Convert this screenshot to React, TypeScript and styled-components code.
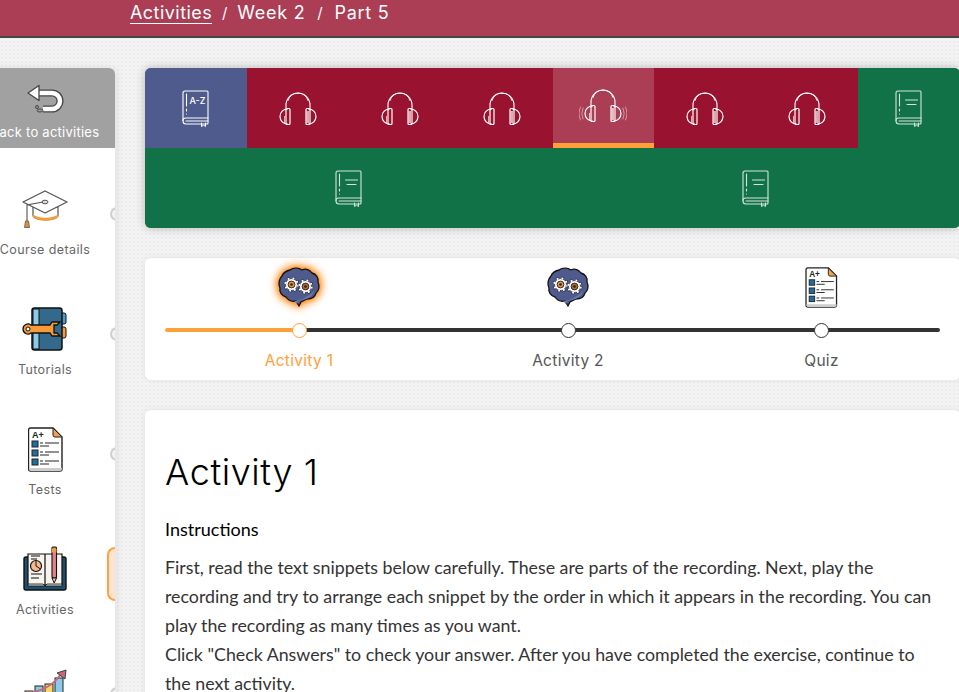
import type { ReactNode } from "react";
import styled, { createGlobalStyle } from "styled-components";

const GlobalStyle = createGlobalStyle`
  html, body {
    margin: 0;
    padding: 0;
    height: 100%;
    overflow: hidden;
    background: #f3f3f3;
  }
  * {
    box-sizing: border-box;
  }
`;

const HEADING_FONT = `Inter, "Open Sans", sans-serif`;

const Page = styled.div`
  height: 692px;
  overflow: hidden;
  background-color: #f3f3f3;
  background-image: radial-gradient(#ececec 1px, transparent 1px);
  background-size: 4px 4px;
`;
const TopBar = styled.div`
  height: 38px;
  padding-left: 130px;
  display: flex;
  align-items: flex-start;
  background: #ab3d55;
  border-bottom: 2px solid #454545;
  color: white;
  font-family: ${HEADING_FONT};
  font-size: 18px;
  line-height: 25px;
`;
const Crumb = styled.span<{ $link?: boolean }>`
  height: 24px;
  letter-spacing: ${(p) => (p.$link ? "0.45px" : "0.75px")};
  border-bottom: ${(p) => (p.$link ? "1px solid white" : "none")};
`;
const Slash = styled.span<{ $width: number }>`
  width: ${(p) => p.$width}px;
  font-size: 15px;
  text-align: center;
`;
const Body = styled.div`
  display: flex;
  align-items: flex-start;
  padding-top: 30px;
`;
const Sidebar = styled.div`
  flex: none;
  width: 140px;
  margin-left: -25px;
  border-radius: 0 6px 0 0;
  background: white;
  box-shadow: 2px 0 8px rgba(0, 0, 0, 0.08);
  font-family: ${HEADING_FONT};
`;
const BackButton = styled.div`
  height: 80px;
  padding-top: 16px;
  display: flex;
  flex-direction: column;
  align-items: center;
  border-radius: 0 6px 0 0;
  background: #a1a1a1;
  color: white;
  font-size: 13px;
  letter-spacing: 0.25px;
  white-space: nowrap;
`;
const BackLabel = styled.div`
  margin-top: 9px;
  line-height: 18px;
`;
const NavItem = styled.div`
  position: relative;
  height: 120px;
  padding-top: 38px;
  display: flex;
  flex-direction: column;
  align-items: center;
  overflow: hidden;
`;
const NavIcon = styled.div`
  width: 46px;
  height: 46px;
  display: flex;
  align-items: center;
  justify-content: center;
`;
const NavLabel = styled.div`
  margin-top: 10px;
  color: #666;
  font-size: 12.5px;
  line-height: 16px;
  letter-spacing: 0.4px;
  white-space: nowrap;
`;
const Handle = styled.div`
  position: absolute;
  top: 59px;
  right: -9px;
  width: 14px;
  height: 14px;
  border-radius: 50%;
  background: #f2f2f2;
  border: 2px solid #cfcfcf;
`;
const ActiveHandle = styled.div`
  position: absolute;
  top: 39px;
  right: 0;
  width: 8px;
  height: 54px;
  border-radius: 10px 0 0 10px;
  border: 2px solid #ffa23f;
  border-right: none;
  background: #fde4cf;
`;
const Main = styled.div`
  flex: none;
  width: 815px;
  margin-left: 30px;
  display: flex;
  flex-direction: column;
  gap: 30px;
`;
const TilePanel = styled.div`
  display: flex;
  flex-wrap: wrap;
  border-radius: 6px;
  overflow: hidden;
  background: #127247;
  box-shadow: 0 0 10px rgba(0, 0, 0, 0.25);
`;
const Tile = styled.div<{ $kind: "vocab" | "audio" | "read"; $active?: boolean }>`
  flex: 1 0 12.5%;
  height: 80px;
  display: flex;
  align-items: center;
  justify-content: center;
  color: white;
  background: ${(p) =>
    p.$active
      ? "#ab3d55"
      : p.$kind === "vocab"
        ? "#4f5b8d"
        : p.$kind === "audio"
          ? "#99122f"
          : "#127247"};
  border-bottom: ${(p) => (p.$active ? "5px solid #ffa038" : "none")};
`;
const StepCard = styled.div`
  height: 122px;
  padding: 0 20px;
  display: grid;
  grid-template-columns: 268px 270px 1fr;
  border-radius: 6px;
  background: white;
  box-shadow: 0 0 6px rgba(0, 0, 0, 0.08);
  font-family: ${HEADING_FONT};
`;
const Step = styled.div`
  display: flex;
  flex-direction: column;
  align-items: center;
`;
const StepIconBox = styled.div`
  height: 68px;
  padding-top: 9px;
  display: flex;
  justify-content: center;
`;
const Rail = styled.div<{ $state: "first" | "middle" | "last" }>`
  align-self: stretch;
  height: 4px;
  margin-top: 2px;
  display: flex;
  justify-content: center;
  align-items: center;
  background: ${(p) =>
    p.$state === "first"
      ? "linear-gradient(to right, #ffa038 50%, #333 50%)"
      : "#333"};
  border-radius: ${(p) =>
    p.$state === "first" ? "2px 0 0 2px" : p.$state === "last" ? "0 2px 2px 0" : "0"};
`;
const Dot = styled.div<{ $done?: boolean }>`
  flex: none;
  width: 15px;
  height: 15px;
  border-radius: 50%;
  background: white;
  border: 1px solid ${(p) => (p.$done ? "#ffa038" : "#333")};
`;
const StepLabel = styled.div<{ $done?: boolean }>`
  margin-top: 19px;
  color: ${(p) => (p.$done ? "#ffa038" : "#555")};
  font-size: 15.5px;
  line-height: 20px;
  letter-spacing: 0.3px;
`;
const ContentCard = styled.div`
  height: 400px;
  padding: 38px 20px 0;
  border-radius: 6px 6px 0 0;
  background: white;
  box-shadow: 0 0 6px rgba(0, 0, 0, 0.08);
  font-family: Lato, "Open Sans", sans-serif;
  color: #333;
`;
const Title = styled.h1`
  margin: 0;
  color: #000;
  font-family: ${HEADING_FONT};
  font-size: 36px;
  font-weight: 300;
  line-height: 48px;
  letter-spacing: 0.6px;
`;
const Instructions = styled.div`
  margin-top: 21px;
  color: #000;
  font-size: 18px;
  font-weight: 400;
  line-height: 24px;
`;
const Paragraph = styled.p`
  margin: 12px 0 0;
  font-size: 17.8px;
  line-height: 29px;
`;

const Line = styled.path`
  fill: none;
  stroke: currentColor;
  stroke-linecap: round;
  stroke-linejoin: round;
`;
const BrainSvg = styled.svg<{ $glow?: boolean }>`
  overflow: visible;
  filter: ${(p) => (p.$glow ? "drop-shadow(0 0 5px #ff8a14) drop-shadow(0 0 2px #ff8a14)" : "none")};
`;

const Headphones = ({ waves }: { waves?: boolean }) => (
  <svg width="48" height="33" viewBox="-6 0 48 33">
    <Line strokeWidth="1.1" d="M6 18V13a12 12 0 0 1 24 0v5" />
    <Line strokeWidth="0.9" d="M8 8.500a10.500 10.500 0 0 1 20 0" />
    <Line strokeWidth="1.2" d="M7.500 17a7.500 7.500 0 0 0 0 15" />
    <Line strokeWidth="1.2" d="M28.500 17a7.500 7.500 0 0 1 0 15" />
    <Line strokeWidth="1.2" d="M7 16.500h2a1 1 0 0 1 1 1V31.500a1 1 0 0 1-1 1H7a1 1 0 0 1-1-1V17.500a1 1 0 0 1 1-1z" />
    <Line strokeWidth="1.2" d="M27 16.500h2a1 1 0 0 1 1 1V31.500a1 1 0 0 1-1 1h-2a1 1 0 0 1-1-1V17.500a1 1 0 0 1 1-1z" />
    <path d="M4 24h1v7H4zM26.500 19h2.500v12h-2.500z" fill="currentColor" opacity="0.65" />
    {waves && (
      <Line
        strokeWidth="0.8"
        opacity="0.6"
        d="M-2 19q-2.500 5.500 0 11M-4.500 18q-3 6.500 0 13M38 19q2.500 5.500 0 11M40.500 18q3 6.500 0 13"
      />
    )}
  </svg>
);

const Book = ({ faded, children }: { faded?: boolean; children?: ReactNode }) => (
  <svg width="28" height="37" viewBox="0 0 28 37" opacity={faded ? 0.82 : 1}>
    <Line strokeWidth="1.1" d="M3 1h22a1 1 0 0 1 1 1v31a1 1 0 0 1-1 1H4a3 3 0 0 1-3-3V3a2 2 0 0 1 2-2z" />
    <Line strokeWidth="1.1" d="M1 30.500a2.500 2.500 0 0 1 2.500-2.500H26M4 31h22" />
    <Line strokeWidth="1.1" d="M4.500 4v12M4.500 19v2M4.500 24v0" />
    <Line strokeWidth="1" d="M19.500 33v3.500l2-1.300 2 1.300V33" />
    {children ?? <Line strokeWidth="1.1" d="M10.500 10h12M12 14.500h9" />}
  </svg>
);

const BackArrow = () => (
  <svg width="38" height="30" viewBox="0 0 38 30">
    <path d="M12 9h14a8 8 0 0 1 0 16H17" fill="none" stroke="#444" strokeWidth="7" />
    <path d="M12 9h14a8 8 0 0 1 0 16H17" fill="none" stroke="white" strokeWidth="4.500" />
    <path d="M13 1.500 2 9l11 7.500z" fill="white" stroke="#444" strokeWidth="1.300" strokeLinejoin="round" />
    <circle cx="11" cy="23" r="1.500" fill="none" stroke="#444" />
    <ellipse cx="14" cy="26.500" rx="3" ry="1.500" fill="none" stroke="#444" />
  </svg>
);

const Mortarboard = () => (
  <svg width="46" height="38" viewBox="0 0 46 38">
    <path d="M11 17v9c3 5 22 5 25 0v-9z" fill="#fff" stroke="#555" strokeWidth="1.200" />
    <path d="M11 24c4 5 21 5 25 0v3c-4 5-21 5-25 0z" fill="#f29a3c" />
    <path d="M23 1 45 12 23 23 1 12z" fill="white" stroke="#555" strokeWidth="1.300" strokeLinejoin="round" />
    <ellipse cx="23" cy="12" rx="3" ry="1.800" fill="#ddd" stroke="#555" />
    <path d="M21 12 5 15v16" fill="none" stroke="#555" strokeWidth="1.100" />
    <path d="M3.500 31h3l1 6.500h-5z" fill="#e58b2f" stroke="#555" strokeWidth="0.800" />
  </svg>
);

const WrenchBook = () => (
  <svg width="46" height="44" viewBox="0 0 46 44">
    <rect x="38" y="6" width="6" height="11" rx="2" fill="#4c9ccb" stroke="#111" />
    <rect x="38" y="20" width="6" height="11" rx="2" fill="#f79b3a" stroke="#111" />
    <rect x="10" y="1" width="30" height="42" rx="2.500" fill="#336a8c" stroke="#111" strokeWidth="1.500" />
    <rect x="11" y="2" width="6" height="40" fill="#8ccaea" stroke="#111" />
    <path
      d="M1 22a5 5 0 0 1 8-4h19l2-3h8l-3 3h-3v8h3l3 3h-8l-2-3H9a5 5 0 0 1-8-4z"
      fill="#f79b3a"
      stroke="#111"
      strokeWidth="1.300"
    />
    <circle cx="6" cy="22" r="2" fill="white" stroke="#111" />
  </svg>
);

const TestSheet = ({ width, height }: { width: number; height: number }) => (
  <svg width={width} height={height} viewBox="0 0 35 45">
    <path d="M2.500 1H25l9 9v32a2 2 0 0 1-2 2H2.500a2 2 0 0 1-2-2V3a2 2 0 0 1 2-2z" fill="white" stroke="#222" strokeWidth="1.400" />
    <path d="M25 1l9 9h-7a2 2 0 0 1-2-2z" fill="#f2a14a" stroke="#222" />
    <path d="M1 41h33v1a2 2 0 0 1-2 2H3a2 2 0 0 1-2-2z" fill="#ccc" />
    <text x="4" y="11" fontFamily="Liberation Sans, sans-serif" fontSize="9" fontWeight="700" fill="#222">
      A+
    </text>
    {[16, 25, 34].map((y) => (
      <g key={y}>
        <rect x="4" y={y - 2} width="6" height="6" fill="#1f6f9e" stroke="#222" />
        <path d={`M12 ${y}h3M17 ${y}h14M12 ${y + 3}h9`} stroke="#222" strokeWidth="1" />
      </g>
    ))}
  </svg>
);

const OpenBook = () => (
  <svg width="46" height="46" viewBox="0 0 46 46">
    <path d="M4 11h38a2 2 0 0 1 2 2v29a2 2 0 0 1-2 2H4a2 2 0 0 1-2-2V13a2 2 0 0 1 2-2z" fill="#1d4f6e" stroke="#111" strokeWidth="1.400" />
    <path d="M6 8h17v31H6zM23 8h17v31H23z" fill="#f7f3ee" stroke="#111" strokeWidth="1.200" />
    <path d="M6 38h15l2 2 2-2h15v2H6z" fill="#d9d3cb" stroke="#111" strokeWidth="0.800" />
    <circle cx="14" cy="20" r="5.500" fill="#f6b98c" stroke="#111" strokeWidth="1.200" />
    <path d="M14 20v-5.500M14 20l4.500 3" stroke="#111" />
    <path d="M9 10h9M9 13h6M9 28h11M9 32h8" stroke="#111" strokeWidth="1.100" />
    <rect x="30" y="1" width="4.500" height="31" rx="1" fill="#e1838a" stroke="#111" strokeWidth="1.100" />
    <path d="M30 4.500h4.500" stroke="#f29a3c" strokeWidth="4" />
    <path d="M30 32l2.200 5 2.300-5z" fill="#f7d6b0" stroke="#111" />
  </svg>
);

const ChartIcon = () => (
  <svg width="46" height="46" viewBox="0 -3 46 46">
    <rect x="3" y="22" width="8" height="20" fill="#f6d766" stroke="#222" />
    <rect x="13" y="17" width="8" height="25" fill="#8ccaea" stroke="#222" />
    <rect x="23" y="15" width="8" height="27" fill="#f6d766" stroke="#222" />
    <rect x="33" y="9" width="8" height="33" fill="#8ccaea" stroke="#222" />
    <path d="M1 24C20 24 32 15 39 5" fill="none" stroke="#c66a7a" strokeWidth="2" />
    <path d="M35 4l9-3-1 9z" fill="#c66a7a" stroke="#222" strokeWidth="0.800" />
  </svg>
);

const Gear = ({ cx, cy, core }: { cx: number; cy: number; core: string }) => (
  <g>
    <circle cx={cx} cy={cy} r="6.300" fill="none" stroke="#111" strokeWidth="3" strokeDasharray="2.470 2.470" />
    <circle cx={cx} cy={cy} r="6.300" fill="none" stroke="white" strokeWidth="2" strokeDasharray="1.900 3.040" strokeDashoffset="-0.280" />
    <circle cx={cx} cy={cy} r="5.500" fill="white" />
    <circle cx={cx} cy={cy} r="3.400" fill={core} stroke="#222" strokeWidth="0.900" />
    <circle cx={cx} cy={cy} r="1.300" fill="#222" />
  </g>
);

const BrainGears = ({ glow }: { glow?: boolean }) => (
  <BrainSvg width="42" height="42" viewBox="0 0 42 42" $glow={glow}>
    <path
      d="M12 3c4-3 9-2 12 0 4-2 8 0 10 3 4 1 7 5 6 9 2 4 1 9-2 11-1 4-5 6-9 6-2 1-4 2-6 3l-2 4-3-5c-4 1-8-1-10-4-4-1-7-5-6-9-2-4-1-9 2-12 1-3 4-5 8-6z"
      fill="#4f5b8d"
      stroke="#111"
      strokeWidth="1.300"
    />
    <path d="M16 34c6 0 14-4 20-10-1 5-6 8-11 9l-4 1-2 3z" fill="#6c76a6" />
    <Gear cx={13.5} cy={17.5} core="#e9923a" />
    <Gear cx={27.5} cy={19.5} core="#b8672a" />
  </BrainSvg>
);

const App = () => {
  return (
    <Page>
      <GlobalStyle />
      <TopBar>
        <Crumb $link>Activities</Crumb>
        <Slash $width={25}>/</Slash>
        <Crumb>Week 2</Crumb>
        <Slash $width={29}>/</Slash>
        <Crumb>Part 5</Crumb>
      </TopBar>
      <Body>
        <Sidebar>
          <BackButton>
            <BackArrow />
            <BackLabel>Back to activities</BackLabel>
          </BackButton>
          <NavItem>
            <NavIcon><Mortarboard /></NavIcon>
            <NavLabel>Course details</NavLabel>
            <Handle />
          </NavItem>
          <NavItem>
            <NavIcon><WrenchBook /></NavIcon>
            <NavLabel>Tutorials</NavLabel>
            <Handle />
          </NavItem>
          <NavItem>
            <NavIcon><TestSheet width={35} height={45} /></NavIcon>
            <NavLabel>Tests</NavLabel>
            <Handle />
          </NavItem>
          <NavItem>
            <NavIcon><OpenBook /></NavIcon>
            <NavLabel>Activities</NavLabel>
            <ActiveHandle />
          </NavItem>
          <NavItem>
            <NavIcon><ChartIcon /></NavIcon>
            <NavLabel>Progress</NavLabel>
            <Handle />
          </NavItem>
        </Sidebar>
        <Main>
          <TilePanel>
            <Tile $kind="vocab">
              <Book>
                <text x="7.5" y="14" fontFamily="Inter, sans-serif" fontSize="9" fontWeight="500" fill="currentColor">
                  A-Z
                </text>
              </Book>
            </Tile>
            <Tile $kind="audio"><Headphones /></Tile>
            <Tile $kind="audio"><Headphones /></Tile>
            <Tile $kind="audio"><Headphones /></Tile>
            <Tile $kind="audio" $active><Headphones waves /></Tile>
            <Tile $kind="audio"><Headphones /></Tile>
            <Tile $kind="audio"><Headphones /></Tile>
            <Tile $kind="read"><Book faded /></Tile>
            <Tile $kind="read"><Book faded /></Tile>
            <Tile $kind="read"><Book faded /></Tile>
          </TilePanel>
          <StepCard>
            <Step>
              <StepIconBox><BrainGears glow /></StepIconBox>
              <Rail $state="first"><Dot $done /></Rail>
              <StepLabel $done>Activity 1</StepLabel>
            </Step>
            <Step>
              <StepIconBox><BrainGears /></StepIconBox>
              <Rail $state="middle"><Dot /></Rail>
              <StepLabel>Activity 2</StepLabel>
            </Step>
            <Step>
              <StepIconBox><TestSheet width={33} height={41} /></StepIconBox>
              <Rail $state="last"><Dot /></Rail>
              <StepLabel>Quiz</StepLabel>
            </Step>
          </StepCard>
          <ContentCard>
            <Title>Activity 1</Title>
            <Instructions>Instructions</Instructions>
            <Paragraph>
              First, read the text snippets below carefully. These are parts of the recording. Next, play the
              recording and try to arrange each snippet by the order in which it appears in the recording. You can
              play the recording as many times as you want.
              <br />
              Click "Check Answers" to check your answer. After you have completed the exercise, continue to
              the next activity.
            </Paragraph>
          </ContentCard>
        </Main>
      </Body>
    </Page>
  );
};

export default App;
